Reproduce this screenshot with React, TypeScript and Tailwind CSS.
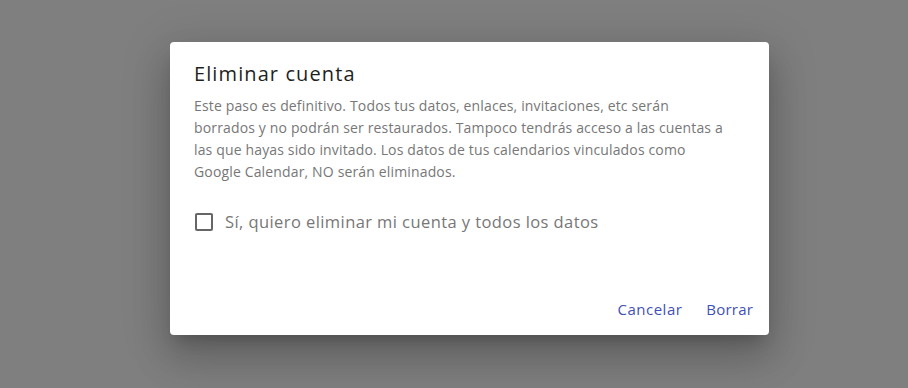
const App = () => {
  return (
    <div
      className="w-[908px] h-[388px] bg-[#7f7f7f] pl-[170px] pt-[42px] overflow-hidden"
      style={{ fontFamily: '"Open Sans", "Noto Sans", sans-serif' }}
    >
      <div className="w-[599px] h-[293px] bg-white rounded flex flex-col shadow-[0px_11px_15px_-7px_rgba(0,0,0,0.2),0px_24px_38px_3px_rgba(0,0,0,0.14),0px_9px_46px_8px_rgba(0,0,0,0.12)]">
        <h2 className="px-6 pt-4 text-[20px] leading-8 font-medium tracking-[1.1px] text-[#1f1f1f]">
          Eliminar cuenta
        </h2>
        <div className="px-6 mt-[5px]">
          <p className="text-[14px] leading-[22px] tracking-[0.15px] text-[#777]">
            Este paso es definitivo. Todos tus datos, enlaces, invitaciones, etc serán
            <br />
            borrados y no podrán ser restaurados. Tampoco tendrás acceso a las cuentas a
            <br />
            las que hayas sido invitado. Los datos de tus calendarios vinculados como
            <br />
            Google Calendar, NO serán eliminados.
          </p>
          <label className="mt-[27px] flex items-center h-6 cursor-pointer">
            <span className="w-[18px] h-[18px] ml-[1px] border-2 border-[#666] rounded-[2px] shrink-0" />
            <span className="ml-[12px] text-[16.5px] tracking-[0.42px] text-[#777]">
              Sí, quiero eliminar mi cuenta y todos los datos
            </span>
          </label>
        </div>
        <div className="mt-auto flex justify-end items-center gap-2 p-2">
          <button className="h-9 px-2 text-[15px] font-medium tracking-[0.5px] text-[#3f51b5] rounded">
            Cancelar
          </button>
          <button className="h-9 px-2 text-[15px] font-medium tracking-[0.2px] text-[#3f51b5] rounded">
            Borrar
          </button>
        </div>
      </div>
    </div>
  );
};

export default App;
